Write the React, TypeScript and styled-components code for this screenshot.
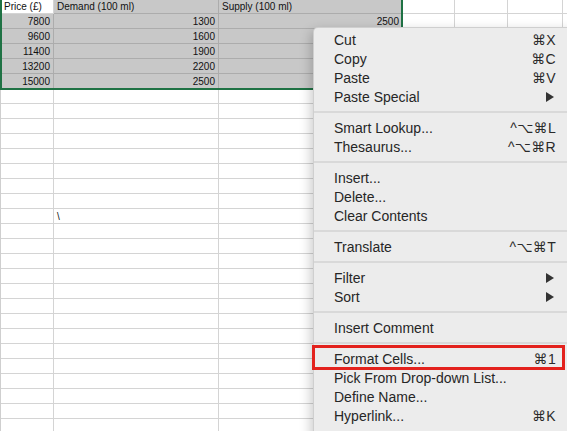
import React from "react";
import styled, { createGlobalStyle } from "styled-components";

const Global = createGlobalStyle`
  html, body { margin: 0; padding: 0; background: #fff; overflow: hidden; }
  #root { width: 567px; height: 431px; overflow: hidden; position: relative; }
`;

const Page = styled.div`
  position: relative;
  width: 567px;
  height: 431px;
  overflow: hidden;
  background: #fff;
`;

const COLS = [53, 165, 184, 52, 53, 55, 60];

const Sheet = styled.div`
  display: grid;
  grid-template-columns: ${COLS.map((c) => c + "px").join(" ")};
  grid-auto-rows: 15px;
  margin-top: -1px;
  border-left: 1px solid #cfcfcf;
  width: max-content;
`;

const Cell = styled.div<{ $sel?: boolean; $align?: "left" | "right" }>`
  box-sizing: border-box;
  border-right: 1px solid ${(p) => (p.$sel ? "#acacac" : "#d4d4d4")};
  border-bottom: 1px solid ${(p) => (p.$sel ? "#acacac" : "#d4d4d4")};
  background: ${(p) => (p.$sel ? "#c8c8c8" : "#fff")};
  font-family: "Liberation Sans", Arial, sans-serif;
  font-size: 10px;
  line-height: 14px;
  color: #111;
  padding: 1px 3px 0 3px;
  text-align: ${(p) => p.$align ?? "left"};
  white-space: nowrap;
  overflow: hidden;
`;

const Selection = styled.div`
  position: absolute;
  left: 0;
  top: -4px;
  width: 403px;
  height: 94px;
  box-sizing: border-box;
  border: 2px solid #1f7244;
  pointer-events: none;
`;

const Menu = styled.div`
  position: absolute;
  left: 313px;
  top: 27px;
  width: 264px;
  height: 420px;
  box-sizing: border-box;
  padding: 2px 20px 4px 0;
  background: #ececec;
  border: 1px solid rgba(0, 0, 0, 0.12);
  border-radius: 5px;
  box-shadow: -2px 4px 12px rgba(0, 0, 0, 0.22);
  display: flex;
  flex-direction: column;
`;

const Item = styled.div`
  height: 19px;
  display: flex;
  align-items: center;
  justify-content: space-between;
  padding-left: 20px;
  font-family: "Liberation Sans", Helvetica, Arial, sans-serif;
  font-size: 14px;
  color: #262626;
  white-space: nowrap;
`;

const Shortcut = styled.span`
  font-family: "Liberation Sans", "DejaVu Sans", sans-serif;
  font-size: 14px;
  color: #2a2a2a;
  letter-spacing: 0.3px;
`;

const Separator = styled.div`
  height: 12px;
  display: flex;
  align-items: center;
  margin-right: -20px;
  &::after {
    content: "";
    display: block;
    width: 100%;
    height: 2px;
    background: #d9d9d9;
  }
`;

const Highlight = styled.div`
  position: absolute;
  left: 312px;
  top: 345px;
  width: 253px;
  height: 25px;
  box-sizing: border-box;
  border: 3px solid #e3221d;
  pointer-events: none;
`;

const Arrow = () => (
  <svg width="8" height="10" viewBox="0 0 8 10" style={{ marginRight: 2 }}>
    <polygon points="0,0 8,5 0,10" fill="#333" />
  </svg>
);

type Entry =
  | { sep: true }
  | { label: string; sc?: string; sub?: boolean };

const MENU: Entry[] = [
  { label: "Cut", sc: "⌘X" },
  { label: "Copy", sc: "⌘C" },
  { label: "Paste", sc: "⌘V" },
  { label: "Paste Special", sub: true },
  { sep: true },
  { label: "Smart Lookup...", sc: "^⌥⌘L" },
  { label: "Thesaurus...", sc: "^⌥⌘R" },
  { sep: true },
  { label: "Insert..." },
  { label: "Delete..." },
  { label: "Clear Contents" },
  { sep: true },
  { label: "Translate", sc: "^⌥⌘T" },
  { sep: true },
  { label: "Filter", sub: true },
  { label: "Sort", sub: true },
  { sep: true },
  { label: "Insert Comment" },
  { sep: true },
  { label: "Format Cells...", sc: "⌘1" },
  { label: "Pick From Drop-down List..." },
  { label: "Define Name..." },
  { label: "Hyperlink...", sc: "⌘K" },
];

const DATA: (string | number)[][] = [
  ["Price (£)", "Demand (100 ml)", "Supply (100 ml)"],
  [7800, 1300, 2500],
  [9600, 1600, ""],
  [11400, 1900, ""],
  [13200, 2200, ""],
  [15000, 2500, ""],
];

const ROWS = 30;

export default function App() {
  const cells: React.ReactNode[] = [];
  for (let r = 0; r < ROWS; r++) {
    for (let c = 0; c < COLS.length; c++) {
      const inData = r < DATA.length && c < 3;
      const v = inData ? DATA[r][c] : r === 14 && c === 1 ? "\\" : "";
      const sel = inData && !(r === 0 && c === 0);
      const align = typeof v === "number" ? "right" : "left";
      cells.push(
        <Cell key={`${r}-${c}`} $sel={sel} $align={align}>
          {v}
        </Cell>
      );
    }
  }
  return (
    <Page>
      <Global />
      <Sheet>{cells}</Sheet>
      <Selection />
      <Menu>
        {MENU.map((m, i) =>
          "sep" in m ? (
            <Separator key={i} />
          ) : (
            <Item key={i}>
              <span>{m.label}</span>
              {m.sc ? <Shortcut>{m.sc}</Shortcut> : m.sub ? <Arrow /> : null}
            </Item>
          )
        )}
      </Menu>
      <Highlight />
    </Page>
  );
}
